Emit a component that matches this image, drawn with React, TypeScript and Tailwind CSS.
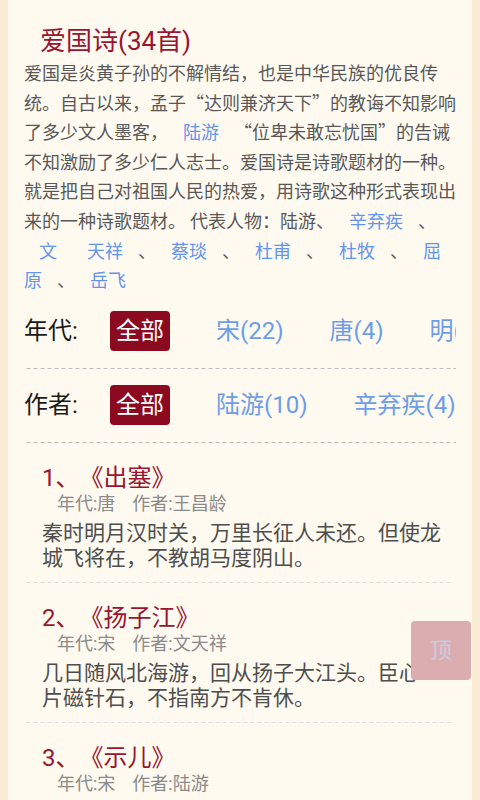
import React from 'react';

const CJK = "font-['Noto_Sans_CJK_SC',sans-serif]";
const MIX = "font-['Roboto','Noto_Sans_CJK_SC',sans-serif]";

const dashed =
  'bg-[linear-gradient(to_right,#bdbdbd_4px,transparent_4px)] bg-[length:7px_1px] bg-repeat-x bg-bottom';
const dashedLight =
  'bg-[linear-gradient(to_right,#dedede_4px,transparent_4px)] bg-[length:7px_1px] bg-repeat-x bg-bottom';

function Author({ children }: { children: React.ReactNode }) {
  return <span className="px-[15px] text-[#6495ed]">{children}</span>;
}

function FilterRow({ label, items }: { label: string; items: string[] }) {
  return (
    <div className={`flex items-center pb-[18px] pt-[16px] ${dashed}`}>
      <span className="w-[86px] flex-none text-[24px] leading-[40px] text-[#1a1a1a]">{label}</span>
      <div className="flex min-w-0 flex-1 items-center gap-[46px] overflow-hidden whitespace-nowrap">
        <span className="flex h-[40px] w-[60px] flex-none items-center justify-center rounded-[4px] bg-[#8b0a20] text-[24px] text-white">
          全部
        </span>
        {items.map((it) => (
          <span key={it} className="flex-none text-[24px] leading-[40px] text-[#6d9de9]">
            {it}
          </span>
        ))}
      </div>
    </div>
  );
}

const poems = [
  {
    no: 1,
    title: '出塞',
    era: '唐',
    author: '王昌龄',
    text: '秦时明月汉时关，万里长征人未还。但使龙城飞将在，不教胡马度阴山。',
  },
  {
    no: 2,
    title: '扬子江',
    era: '宋',
    author: '文天祥',
    text: '几日随风北海游，回从扬子大江头。臣心一片磁针石，不指南方不肯休。',
  },
  {
    no: 3,
    title: '示儿',
    era: '宋',
    author: '陆游',
    text: '死去元知万事空，但悲不见九州同。王师北定中原日，家祭无忘告乃翁。',
  },
];

export default function App() {
  return (
    <div className={`min-h-screen bg-[#faebd7] px-[8px] ${MIX} [text-spacing-trim:space-all]`}>
      <main className="min-h-screen bg-[#fffaf0] px-[16px]">
        {/* 标题 */}
        <h1 className="pl-[16px] pt-[24px] text-[26px] font-normal leading-[34px] text-[#991530]">
          爱国诗(34首)
        </h1>

        {/* 简介 */}
        <p className={`${CJK} w-[432px] text-[18px] leading-[29.6px] text-[#585858]`}>
          爱国是炎黄子孙的不解情结，也是中华民族的优良传统。自古以来，孟子“达则兼济天下”的教诲不知影响了多少文人墨客，
          <Author>陆游</Author>“位卑未敢忘忧国”的告诫不知激励了多少仁人志士。爱国诗是诗歌题材的一种。就是把自己对祖国人民的热爱，用诗歌这种形式表现出来的一种诗歌题材。 代表人物：陆游、
          <Author>辛弃疾</Author>、<Author>
            文<span className="ml-[30px]">天祥</span>
          </Author>
          、<Author>蔡琰</Author>、<Author>杜甫</Author>、<Author>杜牧</Author>、<Author>屈原</Author>、
          <Author>岳飞</Author>
        </p>

        {/* 筛选 */}
        <FilterRow label="年代:" items={['宋(22)', '唐(4)', '明(3)', '清(2)']} />
        <FilterRow label="作者:" items={['陆游(10)', '辛弃疾(4)', '文天祥(2)']} />

        {/* 诗歌列表 */}
        <ul className="mx-[2px]">
          {poems.map((p) => (
            <li key={p.no} className={`pb-[14px] pl-[16px] pt-[20px] ${dashedLight}`}>
              <div className="text-[24px] leading-[30px] text-[#991530]">
                {p.no}、《{p.title}》
              </div>
              <div className="pl-[15px] text-[18px] leading-[22px] text-[#8a8a8a]">
                <span>年代:{p.era}</span>
                <span className="ml-[17px]">作者:{p.author}</span>
              </div>
              <p className={`${CJK} mt-[4px] text-[21px] leading-[25px] text-[#4e4e4e]`}>{p.text}</p>
            </li>
          ))}
        </ul>
      </main>

      {/* 返回顶部 */}
      <button className="fixed right-[9px] top-[621px] flex h-[59px] w-[60px] items-center justify-center rounded-[4px] bg-[#dcadb0] text-[22px] text-[#c7cde2]">
        顶
      </button>
    </div>
  );
}
